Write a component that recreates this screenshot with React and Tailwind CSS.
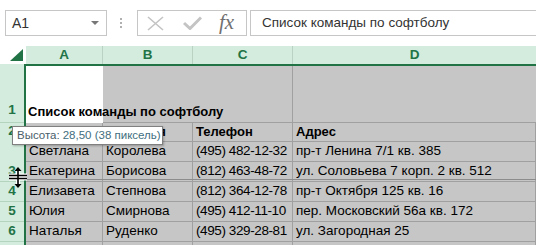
import React from 'react'

const GREEN = '#217346'

const rows = [
  { label: '', cells: ['Светлана', 'Королева', '(495) 482-12-32', 'пр-т Ленина 7/1 кв. 385'] },
  { label: '3', cells: ['Екатерина', 'Борисова', '(812) 463-48-72', 'ул. Соловьева 7 корп. 2 кв. 512'] },
  { label: '4', cells: ['Елизавета', 'Степнова', '(812) 364-12-78', 'пр-т Октября 125 кв. 16'] },
  { label: '5', cells: ['Юлия', 'Смирнова', '(495) 412-11-10', 'пер. Московский 56а кв. 172'] },
  { label: '6', cells: ['Наталья', 'Руденко', '(495) 329-28-81', 'ул. Загородная 25'] },
  { label: '', cells: ['', '', '', ''] },
]

const widths = ['w-[77px]', 'w-[90px]', 'w-[100px]', 'flex-1']

function RowHead({ label, line = true, className = '' }) {
  return (
    <div
      className={`w-[24px] shrink-0 bg-[#d3ecdd] flex justify-center text-[13.5px] font-bold text-[#217346] ${line ? 'border-b border-[#b4d4c0]' : ''} ${className}`}
    >
      {label}
    </div>
  )
}

function Toolbar() {
  return (
    <div className="flex h-[46px] items-start bg-white pt-[10px]">
      <div className="ml-[5px] w-[102px] h-[26px] border border-[#c6c6c6] flex items-center justify-between pl-[6px] pr-[7px] text-[14px] text-[#333]">
        <span>A1</span>
        <svg width="8" height="5" viewBox="0 0 8 5"><polygon points="0,0 8,0 4,4" fill="#777" /></svg>
      </div>
      <div className="ml-[13px] w-[2px] h-[26px] flex flex-col items-center justify-center gap-[2px]">
        <span className="w-[2px] h-[2px] bg-[#b0b0b0]" />
        <span className="w-[2px] h-[2px] bg-[#b0b0b0]" />
        <span className="w-[2px] h-[2px] bg-[#b0b0b0]" />
      </div>
      <div className="ml-[15px] w-[110px] h-[26px] border border-[#c6c6c6] flex items-center">
        <svg className="ml-[9px]" width="17" height="15" viewBox="0 0 17 15">
          <path d="M1 1 L16 14 M16 1 L1 14" stroke="#c4c4c4" strokeWidth="1.6" fill="none" />
        </svg>
        <svg className="ml-[19px]" width="19" height="14" viewBox="0 0 19 14">
          <path d="M1 7 L7 12.5 L18 1.5" stroke="#c4c4c4" strokeWidth="3" fill="none" />
        </svg>
        <span className="ml-[17px] font-['Liberation_Serif',serif] italic text-[21px] leading-none text-[#707070] -mt-[2px]">
          fx
        </span>
      </div>
      <div className="ml-[3px] flex-1 h-[26px] border border-r-0 border-[#c6c6c6] flex items-center pl-[11px] text-[13.5px] text-[#333] whitespace-nowrap">
        Список команды по софтболу
      </div>
    </div>
  )
}

export default function App() {
  return (
    <div className="relative w-[536px] h-[245px] overflow-hidden bg-white font-['Liberation_Sans',Arial,sans-serif]">
      <Toolbar />

      {/* column headers */}
      <div className="flex h-[18px]">
        <div className="w-[26px] shrink-0 bg-white flex items-end justify-end pr-[3px] pb-[3px]">
          <svg width="13" height="12" viewBox="0 0 13 12"><polygon points="13,0 13,12 0,12" fill={GREEN} /></svg>
        </div>
        {['A', 'B', 'C', 'D'].map((c, i) => (
          <div
            key={c}
            className={`${widths[i]} shrink-0 bg-[#d3ecdd] flex items-center justify-center text-[13.5px] font-bold text-[#217346] ${i < 3 ? 'border-r border-[#b9d2c2]' : ''}`}
          >
            {c}
          </div>
        ))}
      </div>
      <div className="flex h-[2px]">
        <div className="w-[24px] bg-[#d3ecdd]" />
        <div className="flex-1 bg-[#217346]" />
      </div>

      {/* row 1 */}
      <div className="flex h-[57px]">
        <RowHead label="1" className="items-end pb-[2px]" />
        <div className="w-[2px] bg-[#217346]" />
        <div className="w-[77px] shrink-0 bg-white flex items-end pb-[2px] pl-[2px]">
          <span className="relative z-10 whitespace-nowrap font-bold text-[13px] text-black">Список команды по софтболу</span>
        </div>
        <div className="w-[90px] shrink-0 bg-[#c6c6c6] border-b border-[#a0a0a0]" />
        <div className="w-[100px] shrink-0 bg-[#c6c6c6] border-b border-r border-[#a0a0a0]" />
        <div className="flex-1 bg-[#c6c6c6] border-b border-[#a0a0a0]" />
      </div>

      {/* row 2 */}
      <div className="flex h-[19px]">
        <RowHead label="2" line={false} className="items-start leading-[15px]" />
        <div className="w-[2px] bg-[#217346]" />
        {['Имя', 'Фамилия', 'Телефон', 'Адрес'].map((t, i) => (
          <div
            key={t}
            className={`${widths[i]} shrink-0 bg-[#c6c6c6] border-b border-r border-[#a0a0a0] flex items-center pl-[3px] font-bold text-[13px] text-black whitespace-nowrap overflow-hidden`}
          >
            {t}
          </div>
        ))}
      </div>

      {rows.map((r, ri) => (
        <div key={ri} className="flex h-[20px]">
          <RowHead label={r.label} line={ri !== 0} className="items-center" />
          <div className="w-[2px] bg-[#217346]" />
          {r.cells.map((t, i) => (
            <div
              key={i}
              className={`${widths[i]} shrink-0 bg-[#c6c6c6] border-b border-r border-[#a0a0a0] flex items-center pl-[3px] text-[13.5px] text-black whitespace-nowrap overflow-hidden ${i === 2 ? 'tracking-[-0.4px]' : ''}`}
            >
              {t}
            </div>
          ))}
        </div>
      ))}

      {/* drag preview line */}
      <div className="absolute left-[26px] right-0 top-[179px] h-px bg-[#8c8c8c]" />

      {/* tooltip */}
      <div className="absolute left-[12px] top-[126px] w-[151px] h-[19px] border border-[#808080] bg-white shadow-[1px_1px_2px_rgba(0,0,0,0.25)] flex items-center pl-[4px] text-[11.5px] text-[#4a5e6a] whitespace-nowrap">
        Высота: <span className="ml-[3px] text-[#3f6e7e]">28,50 (38 пиксель)</span>
      </div>

      {/* row-resize cursor */}
      <svg className="absolute left-[8px] top-[167px]" width="20" height="21" viewBox="0 0 20 21">
        <g stroke="#fff" strokeWidth="4" fill="none">
          <path d="M10 2 V19 M1 8.5 H19 M1 11.5 H19" />
        </g>
        <g stroke="#000" strokeWidth="1.6" fill="none">
          <path d="M10 2 V19 M1 8.5 H19 M1 11.5 H19" />
        </g>
        <polygon points="10,0 6.5,4 13.5,4" fill="#000" />
        <polygon points="10,21 6.5,17 13.5,17" fill="#000" />
      </svg>
    </div>
  )
}
